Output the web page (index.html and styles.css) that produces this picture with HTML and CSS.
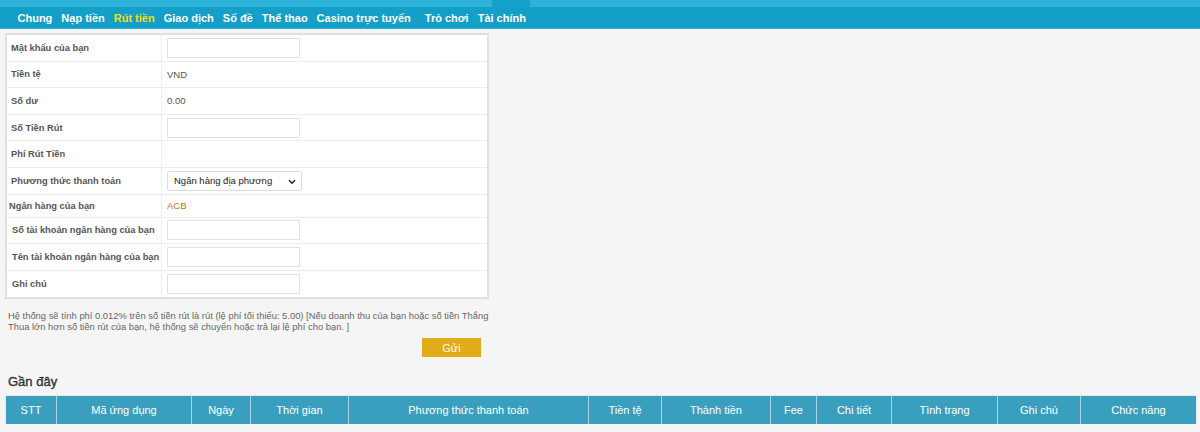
FILE: index.html
```html
<!DOCTYPE html>
<html lang="vi">
<head>
<meta charset="utf-8">
<title>Rút tiền</title>
<link rel="stylesheet" href="styles.css">
</head>
<body>
<div class="topbar"><span class="tb-a"></span><span class="tb-b"></span><span class="tb-c"></span></div>
<nav class="nav">
  <a class="nav-item">Chung</a>
  <a class="nav-item">Nạp tiền</a>
  <a class="nav-item active">Rút tiền</a>
  <a class="nav-item">Giao dịch</a>
  <a class="nav-item">Số đề</a>
  <a class="nav-item">Thể thao</a>
  <a class="nav-item wide">Casino trực tuyến</a>
  <a class="nav-item">Trò chơi</a>
  <a class="nav-item">Tài chính</a>
</nav>
<main class="main">
  <div class="form-box">
    <div class="row"><div class="lbl">Mật khẩu của bạn</div><div class="val"><span class="input"></span></div></div>
    <div class="row"><div class="lbl">Tiền tệ</div><div class="val">VND</div></div>
    <div class="row"><div class="lbl">Số dư</div><div class="val">0.00</div></div>
    <div class="row"><div class="lbl">Số Tiền Rút</div><div class="val"><span class="input"></span></div></div>
    <div class="row"><div class="lbl">Phí Rút Tiền</div><div class="val"></div></div>
    <div class="row"><div class="lbl">Phương thức thanh toán</div><div class="val"><span class="select">Ngân hàng địa phương<svg class="chev" width="8" height="6" viewBox="0 0 8 6"><path d="M1 1.2l3 3 3-3" fill="none" stroke="#222" stroke-width="1.5"/></svg></span></div></div>
    <div class="row short"><div class="lbl lbl-tight">Ngân hàng của bạn</div><div class="val bank">ACB</div></div>
    <div class="row"><div class="lbl lbl-wide">Số tài khoản ngân hàng của bạn</div><div class="val"><span class="input"></span></div></div>
    <div class="row"><div class="lbl lbl-wide">Tên tài khoản ngân hàng của bạn</div><div class="val"><span class="input"></span></div></div>
    <div class="row last"><div class="lbl lbl-wide">Ghi chú</div><div class="val"><span class="input"></span></div></div>
  </div>
  <p class="note">Hệ thống sẽ tính phí 0.012% trên số tiền rút là rút (lệ phí tối thiểu: 5.00) [Nếu doanh thu của bạn hoặc số tiền Thắng<br>Thua lớn hơn số tiền rút của bạn, hệ thống sẽ chuyển hoặc trả lại lệ phí cho bạn. ]</p>
  <div class="actions"><button class="btn">Gửi</button></div>
  <h2 class="recent">Gần đây</h2>
  <div class="thead">
    <div>STT</div><div>Mã ứng dụng</div><div>Ngày</div><div>Thời gian</div><div>Phương thức thanh toán</div><div>Tiền tệ</div><div>Thành tiền</div><div>Fee</div><div>Chi tiết</div><div>Tình trạng</div><div>Ghi chú</div><div>Chức năng</div>
  </div>
</main>
</body>
</html>
```
FILE: styles.css
```css
html, body {
  margin: 0;
  padding: 0;
}
body {
  background: #f5f5f5;
  font-family: "Liberation Sans", Arial, sans-serif;
  color: #333;
}
.topbar {
  display: flex;
  height: 7px;
}
.tb-a { width: 492px; background: #2db3da; }
.tb-b { width: 38px; background: #15a0c8; }
.tb-c { flex: 1; background: #2db3da; }
.nav {
  display: flex;
  align-items: center;
  height: 21px;
  background: #139fc7;
  border-bottom: 1px solid #2fb0d6;
  padding-left: 13px;
}
.nav-item {
  color: #fff;
  font-weight: bold;
  font-size: 11px;
  padding: 0 4.5px;
  white-space: nowrap;
}
.nav-item.wide { margin-right: 5px; }
.nav-item.active { color: #f8dd16; }
.main {
  padding: 4px 0 0 5px;
}
.form-box {
  width: 480px;
  border: 2px solid #e0e0e0;
  background: #fff;
}
.row {
  display: flex;
  height: 26.6px;
  border-bottom: 1px solid #ececec;
  box-sizing: border-box;
}
.row.short { height: 23px; }
.row.last { border-bottom: none; }
.lbl {
  width: 155px;
  flex: none;
  box-sizing: border-box;
  padding-left: 4px;
  border-right: 1px solid #eeeeee;
  display: flex;
  align-items: center;
  font-size: 9.3px;
  font-weight: bold;
  color: #555;
  white-space: nowrap;
}
.lbl-tight { padding-left: 2px; }
.lbl-wide { padding-left: 5px; }
.val {
  display: flex;
  align-items: center;
  padding-left: 5px;
  font-size: 9.5px;
  color: #555;
}
.val.bank { color: #b8732f; }
.input {
  display: block;
  width: 133px;
  height: 20px;
  box-sizing: border-box;
  border: 1px solid #e2e2e2;
  background: #fff;
}
.select {
  position: relative;
  display: flex;
  align-items: center;
  width: 135px;
  height: 20px;
  box-sizing: border-box;
  border: 1px solid #dcdcdc;
  border-radius: 2px;
  padding-left: 6px;
  font-size: 9.5px;
  color: #222;
  background: #fff;
}
.chev {
  position: absolute;
  right: 5px;
  top: 7px;
}
.note {
  margin: 11px 0 0 3px;
  font-size: 9.4px;
  line-height: 11px;
  color: #666;
  white-space: nowrap;
}
.actions {
  display: flex;
  justify-content: flex-end;
  width: 476px;
  margin-top: 6px;
}
.btn {
  width: 59px;
  height: 19px;
  border: none;
  background: #e2ab18;
  color: #fff;
  font-family: inherit;
  font-size: 11px;
  padding: 0;
}
.recent {
  margin: 16px 0 3px 3px;
  font-size: 13px;
  font-weight: normal;
  color: #333;
  line-height: 18px;
  height: 20px;
  -webkit-text-stroke: 0.35px #333;
}
.thead {
  display: grid;
  grid-template-columns: 50px 135px 59px 98px 240px 73px 109px 46px 75px 106px 83px 116px;
  width: 1190px;
  height: 28px;
  margin: 0 0 0 1px;
  background: #3a9fbf;
  box-shadow: 0 0 2px rgba(0,0,0,0.18);
}
.thead > div {
  display: flex;
  align-items: center;
  justify-content: center;
  color: #fff;
  font-size: 11px;
  border-left: 1px solid rgba(255,255,255,0.55);
}
.thead > div:first-child { border-left: none; }
```
